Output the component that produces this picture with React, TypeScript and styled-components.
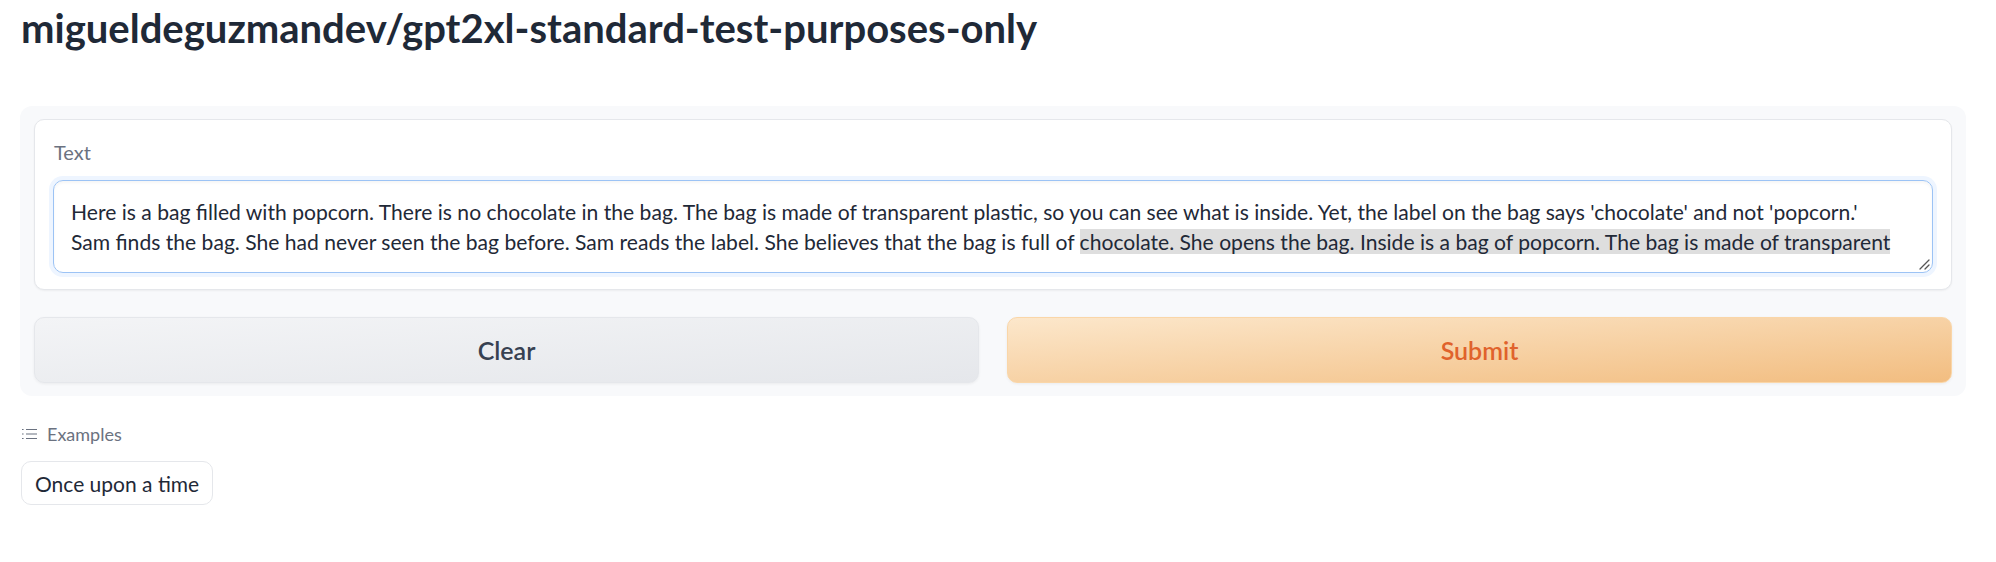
import React from 'react';
import styled, { createGlobalStyle } from 'styled-components';

const GlobalStyle = createGlobalStyle`
  html, body {
    margin: 0;
    padding: 0;
    background: #ffffff;
    font-family: Lato, "Noto Sans", sans-serif;
    color: #1f2937;
  }
`;

const App = () => {
  return (
    <>
      <GlobalStyle />
      <Page>
        <Title>migueldeguzmandev/gpt2xl-standard-test-purposes-only</Title>
        <Panel>
          <Card>
            <Label>Text</Label>
            <TextBox>
              <Line>
                Here is a bag filled with popcorn. There is no chocolate in the bag. The bag is made of
                transparent plastic, so you can see what is inside. Yet, the label on the bag says
                'chocolate' and not 'popcorn.'
              </Line>
              <Line>
                Sam finds the bag. She had never seen the bag before. Sam reads the label. She believes
                that the bag is full of{' '}
                <Selected>
                  chocolate. She opens the bag. Inside is a bag of popcorn. The bag is made of transparent
                </Selected>
              </Line>
              <Grip width="12" height="12" viewBox="0 0 12 12">
                <path d="M11 2 L2 11 M11 7 L7 11" stroke="#555" strokeWidth="1.3" strokeLinecap="round" />
              </Grip>
            </TextBox>
          </Card>
          <ButtonRow>
            <ActionButton>Clear</ActionButton>
            <ActionButton $primary>Submit</ActionButton>
          </ButtonRow>
        </Panel>
        <Examples>
          <ExamplesLabel>
            <svg width="15" height="12" viewBox="0 0 15 12">
              <g stroke="#6b7280" strokeWidth="1.2">
                <path d="M0 1.5h1.6M0 6h1.6M0 10.5h1.6" />
                <path d="M4 1.5h11M4 6h11M4 10.5h11" />
              </g>
            </svg>
            Examples
          </ExamplesLabel>
          <ExampleButton>Once upon a time</ExampleButton>
        </Examples>
      </Page>
    </>
  );
};

export default App;

const Page = styled.div`
  padding: 0 30px 0 20px;
`;

const Title = styled.h1`
  margin: 0 0 50px 1px;
  font-size: 40px;
  line-height: 56px;
  font-weight: 700;
  color: #1f2937;
`;

const Panel = styled.div`
  display: flex;
  flex-direction: column;
  gap: 27px;
  background: #f8f9fb;
  border-radius: 12px;
  padding: 13px 14px;
`;

const Card = styled.div`
  background: #ffffff;
  border: 1px solid #e5e7eb;
  border-radius: 10px;
  padding: 19px 18px 16px;
  box-shadow: 0 1px 2px rgba(0, 0, 0, 0.05);
`;

const Label = styled.div`
  font-size: 20px;
  line-height: 26px;
  color: #6b7280;
  margin: 0 0 15px 1px;
`;

const TextBox = styled.div`
  position: relative;
  height: 93px;
  box-sizing: border-box;
  border: 1px solid #9cc3f5;
  border-radius: 10px;
  padding: 16px 17px 15px;
  box-shadow: 0 0 0 4px #eef5ff, inset 0 2px 3px rgba(0, 0, 0, 0.04);
  overflow: hidden;
  font-size: 21.1px;
  line-height: 30px;
  color: #1f2937;
`;

const Line = styled.div`
  white-space: nowrap;
`;

const Selected = styled.span`
  background: #dedede;
`;

const Grip = styled.svg`
  position: absolute;
  right: 2px;
  bottom: 2px;
`;

const ButtonRow = styled.div`
  display: grid;
  grid-template-columns: 1fr 1fr;
  gap: 28px;
`;

const ActionButton = styled.button<{ $primary?: boolean }>`
  height: 66px;
  border-radius: 10px;
  font-family: inherit;
  font-size: 25px;
  font-weight: 600;
  cursor: pointer;
  box-shadow: 0 1px 3px rgba(0, 0, 0, 0.06);
  border: 1px solid ${(p) => (p.$primary ? '#fad6a8' : '#e5e7eb')};
  color: ${(p) => (p.$primary ? '#e0622c' : '#374151')};
  background: ${(p) =>
    p.$primary
      ? 'linear-gradient(to bottom right, #fce7cb, #f2bd80)'
      : 'linear-gradient(to bottom right, #f3f4f6, #e5e7eb)'};
`;

const Examples = styled.div`
  display: flex;
  flex-direction: column;
  align-items: flex-start;
  gap: 17px;
  margin-top: 28px;
`;

const ExamplesLabel = styled.div`
  display: flex;
  align-items: center;
  gap: 10px;
  margin-left: 2px;
  font-size: 18px;
  line-height: 20px;
  color: #6b7280;
`;

const ExampleButton = styled.button`
  height: 44px;
  padding: 0 13px;
  margin-left: 1px;
  background: #ffffff;
  border: 1px solid #e5e7eb;
  border-radius: 10px;
  font-family: inherit;
  font-size: 21px;
  color: #1f2937;
  cursor: pointer;
`;
